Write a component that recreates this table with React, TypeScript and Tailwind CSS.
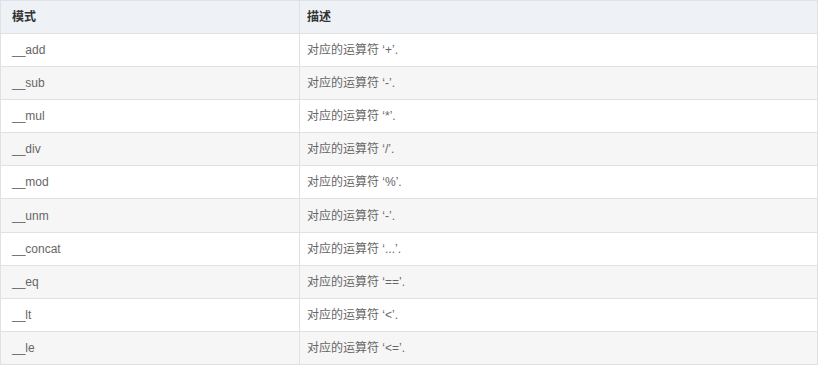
import React from "react";

const rows = [
  { mode: "__add", op: "+" },
  { mode: "__sub", op: "-" },
  { mode: "__mul", op: "*" },
  { mode: "__div", op: "/" },
  { mode: "__mod", op: "%" },
  { mode: "__unm", op: "-" },
  { mode: "__concat", op: "..." },
  { mode: "__eq", op: "==" },
  { mode: "__lt", op: "<" },
  { mode: "__le", op: "<=" },
];

const App = () => {
  return (
    <div
      className="w-[818px] bg-white"
      style={{ fontFamily: '"Liberation Sans", Arial, "Noto Sans CJK SC", sans-serif' }}
    >
      <table className="w-[818px] border-collapse text-[12px] table-fixed">
        <thead>
          <tr className="h-[33px] bg-[#eef2f6]">
            <th className="w-[299px] border border-[#dfe2e5] text-left font-bold text-[#333] pl-[11px]">
              模式
            </th>
            <th className="border border-[#dfe2e5] text-left font-bold text-[#333] pl-[7px]">
              描述
            </th>
          </tr>
        </thead>
        <tbody>
          {rows.map((row, i) => (
            <tr
              key={i}
              className={`h-[33.1px] ${i % 2 === 1 ? "bg-[#f6f6f6]" : "bg-white"}`}
            >
              <td className="border border-[#dfe2e5] text-[#666] pl-[11px]">
                {row.mode}
              </td>
              <td className="border border-[#dfe2e5] text-[#666] pl-[7px]">
                对应的运算符 ‘{row.op}’.
              </td>
            </tr>
          ))}
        </tbody>
      </table>
    </div>
  );
};

export default App;
